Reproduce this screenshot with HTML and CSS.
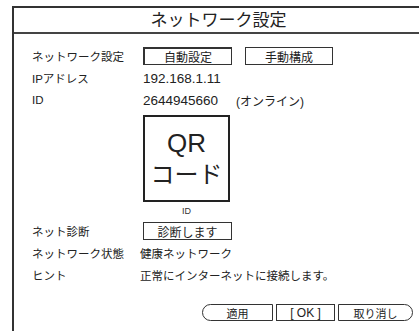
FILE: index.html
```html
<!DOCTYPE html>
<html lang="ja">
<head>
    <meta charset="UTF-8" />
    <title>ネットワーク設定</title>
    <link rel="stylesheet" href="styles.css">
</head>
<body>
    <div class="panel">
        <h3 class="title">ネットワーク設定</h3>
        <div class="content">
            <div class="row">
                <span class="label">ネットワーク設定</span>
                <span class="btn btn-auto">自動設定</span>
                <span class="btn btn-manual">手動構成</span>
            </div>
            <div class="row">
                <span class="label">IPアドレス</span>
                <span class="num">192.168.1.11</span>
            </div>
            <div class="row">
                <span class="label">ID</span>
                <span class="num">2644945660</span>
                <span class="status">(オンライン)</span>
            </div>
            <div class="qr-wrap">
                <div class="qr">
                    <span class="qr-top">QR</span>
                    <span class="qr-bottom">コード</span>
                </div>
                <div class="qr-caption">ID</div>
            </div>
            <div class="row">
                <span class="label">ネット診断</span>
                <span class="btn btn-diag">診断します</span>
            </div>
            <div class="row">
                <span class="label">ネットワーク状態</span>
                <span class="value">健康ネットワーク</span>
            </div>
            <div class="row">
                <span class="label">ヒント</span>
                <span class="value">正常にインターネットに接続します。</span>
            </div>
            <div class="actions">
                <span class="act act-apply">適用</span>
                <span class="act act-ok">[ OK ]</span>
                <span class="act act-cancel">取り消し</span>
            </div>
        </div>
    </div>
</body>
</html>
```

FILE: styles.css
```css
*{
    margin: 0;
    padding: 0;
    box-sizing: border-box;
}
html,body{
    width: 100%;
    height: 100%;
    overflow: hidden;
    background: #fff;
}
body{
    font-family: "Liberation Sans", "Noto Sans CJK JP", sans-serif;
    color: #222;
}
.panel{
    margin: 6px 0 0 12px;
    width: 413px;
    height: 340px;
    border: 2px solid #333;
}
.title{
    height: 26px;
    line-height: 25px;
    text-align: center;
    font-size: 17px;
    font-weight: normal;
    border-bottom: 2px solid #444;
}
.content{
    padding: 11px 0 0 18px;
}
.row{
    display: flex;
    align-items: center;
    height: 22px;
    font-size: 11.5px;
}
.label{
    width: 111px;
    flex-shrink: 0;
}
.num{
    font-size: 13.5px;
}
.status{
    margin-left: 18px;
    font-size: 12px;
}
.value{
    margin-left: -3px;
}
.btn{
    display: flex;
    align-items: center;
    justify-content: center;
    height: 18px;
    border: 1.5px solid #333;
    font-size: 12px;
}
.btn-auto{
    width: 89px;
    border-width: 2px 1.5px 1.5px 2px;
}
.btn-manual{
    width: 88px;
    margin-left: 13px;
}
.btn-diag{
    width: 89px;
}
.qr-wrap{
    width: 87px;
    margin: 4px 0 0 111px;
}
.qr{
    width: 87px;
    height: 87px;
    border: 2px solid #222;
    display: flex;
    flex-direction: column;
    align-items: center;
    justify-content: center;
    line-height: 32px;
}
.qr-top{
    font-size: 26px;
}
.qr-bottom{
    font-size: 24px;
}
.qr-caption{
    text-align: center;
    font-size: 9px;
    line-height: 12px;
    height: 18px;
    padding-top: 3px;
    color: #333;
}
.actions{
    display: flex;
    gap: 3px;
    margin: 18px 0 0 170px;
}
.act{
    display: flex;
    align-items: center;
    justify-content: center;
    height: 17px;
    border: 1.5px solid #333;
    font-size: 11px;
}
.act-apply{
    width: 71px;
    border-radius: 9px 0 0 9px;
}
.act-ok{
    width: 59px;
    font-size: 12px;
}
.act-cancel{
    width: 75px;
    border-radius: 0 9px 9px 0;
}
```
